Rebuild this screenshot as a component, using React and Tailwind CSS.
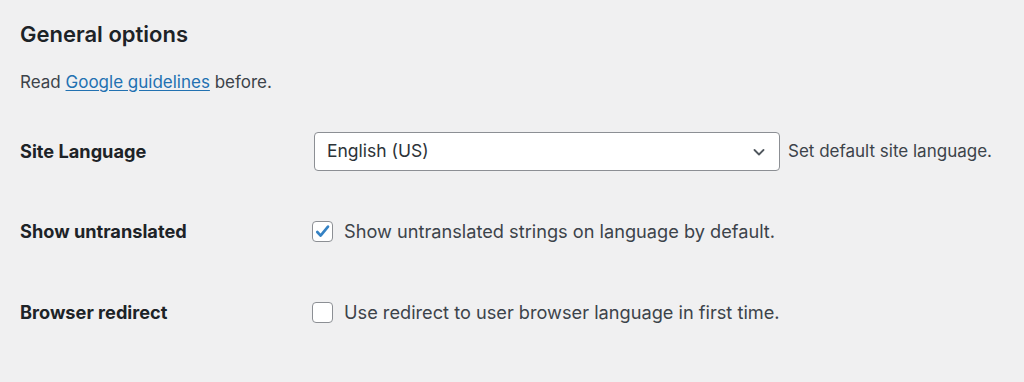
import { useState } from "react";

function Checkbox({ checked, onChange }) {
  return (
    <button
      type="button"
      onClick={onChange}
      className="w-[21px] h-[21px] shrink-0 rounded-[4px] border border-[#8c8f94] bg-white flex items-center justify-center"
    >
      {checked && (
        <svg width="19" height="19" viewBox="0 0 20 20">
          <path d="M4.5 10.5l3.5 3.8L15.8 4.8" fill="none" stroke="#3582c4" strokeWidth="2.8" strokeLinecap="round" strokeLinejoin="round" />
        </svg>
      )}
    </button>
  );
}

export default function App() {
  const [showUntranslated, setShowUntranslated] = useState(true);
  const [redirect, setRedirect] = useState(false);

  return (
    <div
      className="w-[1024px] h-[382px] bg-[#f0f0f1] px-[20px] pt-[20px] text-[#3c434a]"
      style={{ fontFamily: "Inter, 'Liberation Sans', sans-serif" }}
    >
      <h2 className="text-[22px] leading-[28px] font-semibold text-[#1d2327]">General options</h2>
      <p className="mt-[22px] text-[17px] leading-[24px]">
        Read{" "}
        <a href="#" className="text-[#2271b1] underline underline-offset-2">
          Google guidelines
        </a>{" "}
        before.
      </p>

      {/* Site Language */}
      <div className="mt-[38px] flex items-center h-[39px]">
        <label className="w-[294px] text-[18.2px] font-bold text-[#1d2327]">Site Language</label>
        <div className="w-[466px] h-[39px] bg-white border border-[#8c8f94] rounded-[4px] flex items-center justify-between pl-[12px] pr-[12px]">
          <span className="text-[17.5px] text-[#2c3338]">English (US)</span>
          <svg width="16" height="16" viewBox="0 0 16 16">
            <path d="M3.5 6l4.5 4.5L12.5 6" fill="none" stroke="#50575e" strokeWidth="1.8" strokeLinecap="round" strokeLinejoin="round" />
          </svg>
        </div>
        <span className="ml-[8px] text-[17px]">Set default site language.</span>
      </div>

      {/* Show untranslated */}
      <div className="mt-[41px] flex items-center h-[39px]">
        <label className="w-[292px] text-[18.2px] font-bold text-[#1d2327]">Show untranslated</label>
        <Checkbox checked={showUntranslated} onChange={() => setShowUntranslated(!showUntranslated)} />
        <span className="ml-[11px] text-[18.2px]">Show untranslated strings on language by default.</span>
      </div>

      {/* Browser redirect */}
      <div className="mt-[42px] flex items-center h-[39px]">
        <label className="w-[292px] text-[18.2px] font-bold text-[#1d2327]">Browser redirect</label>
        <Checkbox checked={redirect} onChange={() => setRedirect(!redirect)} />
        <span className="ml-[11px] text-[18.2px]">Use redirect to user browser language in first time.</span>
      </div>
    </div>
  );
}
